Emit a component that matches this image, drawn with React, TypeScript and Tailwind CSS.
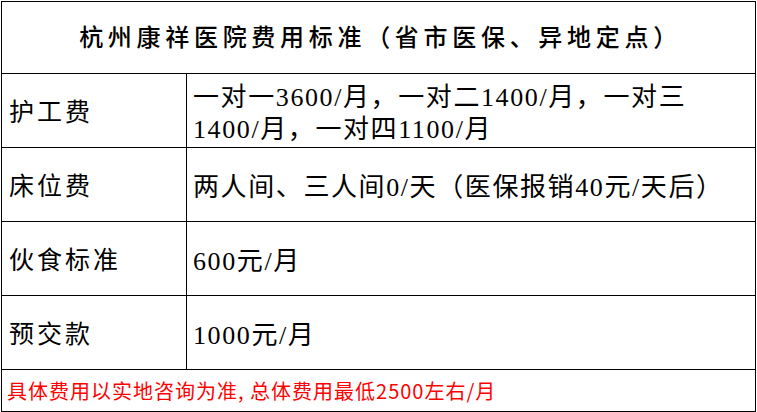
const serif = "font-['Liberation_Serif','Noto_Sans_CJK_SC',serif]";

const rows = [
  { label: "护工费", lines: ["一对一3600/月，一对二1400/月，一对三", "1400/月，一对四1100/月"] },
  { label: "床位费", lines: ["两人间、三人间0/天（医保报销40元/天后）"] },
  { label: "伙食标准", lines: ["600元/月"] },
  { label: "预交款", lines: ["1000元/月"] },
];

export default function App() {
  return (
    <div className="w-[757px] h-[412px] bg-white text-black">
      <div className="ml-[1px] mt-[1px] w-[755px] h-[411px] border border-black flex flex-col">
        <div
          className={`h-[72px] shrink-0 border-b border-black flex items-center justify-center pl-[4px] text-[24px] font-medium tracking-[4.7px] ${serif}`}
        >
          杭州康祥医院费用标准（省市医保、异地定点）
        </div>
        {rows.map((row) => (
          <div key={row.label} className="h-[74px] shrink-0 border-b border-black flex">
            <div
              className={`w-[185px] shrink-0 border-r border-black flex items-center pl-[7px] pt-[5px] text-[25px] tracking-[3px] ${serif}`}
            >
              {row.label}
            </div>
            <div
              className={`flex-1 flex flex-col justify-center pl-[6px] pt-[6px] text-[26px] leading-[32px] tracking-[1.6px] ${serif}`}
            >
              {row.lines.map((line) => (
                <div key={line} className="whitespace-nowrap">
                  {line}
                </div>
              ))}
            </div>
          </div>
        ))}
        <div className="flex-1 flex items-center pl-[5px] text-[20px] tracking-[1px] text-[#ff0000] font-['Noto_Sans_CJK_SC',sans-serif]">
          具体费用以实地咨询为准, 总体费用最低2500左右/月
        </div>
      </div>
    </div>
  );
}
